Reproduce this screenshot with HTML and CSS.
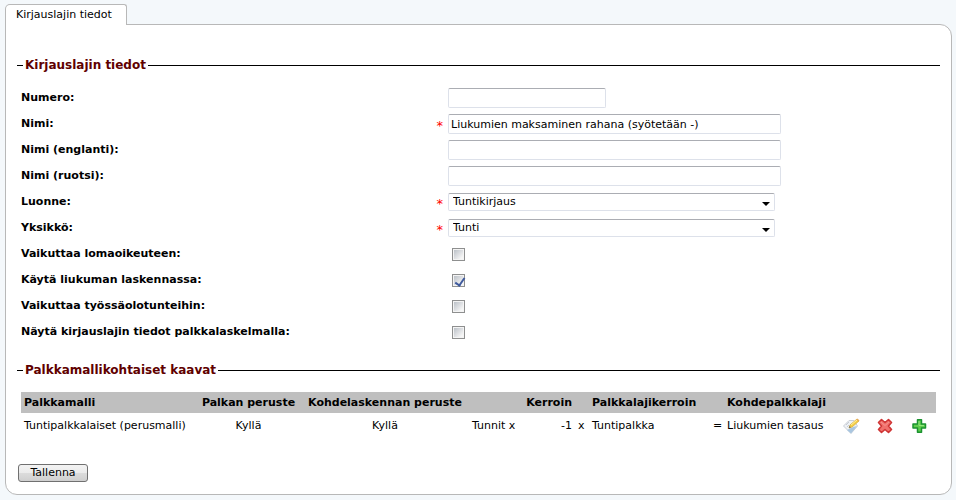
FILE: index.html
```html
<!DOCTYPE html>
<html lang="fi">
<head>
    <meta charset="UTF-8">
    <meta name="viewport" content="width=device-width, initial-scale=1.0">
    <title>Kirjauslajin tiedot</title>
    <link rel="stylesheet" href="styles.css">
</head>
<body>
    <div class="tabs">
      <a class="tab" href="#tiedot">Kirjauslajin tiedot</a>
    </div>
    <form class="panel" id="tiedot">
      <fieldset>
        <legend>Kirjauslajin tiedot</legend>
        <div class="rows">
          <div class="row">
            <label for="numero">Numero:</label>
            <input type="text" id="numero" class="short">
          </div>
          <div class="row">
            <label for="nimi">Nimi: <span class="required">*</span></label>
            <input type="text" id="nimi" value="Liukumien maksaminen rahana (syötetään -)">
          </div>
          <div class="row">
            <label for="nimiEn">Nimi (englanti):</label>
            <input type="text" id="nimiEn">
          </div>
          <div class="row">
            <label for="nimiSv">Nimi (ruotsi):</label>
            <input type="text" id="nimiSv">
          </div>
          <div class="row">
            <label for="luonne">Luonne: <span class="required">*</span></label>
            <span class="select">
              <select id="luonne">
                <option>Tuntikirjaus</option>
              </select>
            </span>
          </div>
          <div class="row">
            <label for="yksikko">Yksikkö: <span class="required">*</span></label>
            <span class="select">
              <select id="yksikko">
                <option>Tunti</option>
              </select>
            </span>
          </div>
          <div class="row">
            <label for="loma">Vaikuttaa lomaoikeuteen:</label>
            <input type="checkbox" id="loma">
          </div>
          <div class="row">
            <label for="liukuma">Käytä liukuman laskennassa:</label>
            <input type="checkbox" id="liukuma" checked>
          </div>
          <div class="row">
            <label for="tyossaolo">Vaikuttaa työssäolotunteihin:</label>
            <input type="checkbox" id="tyossaolo">
          </div>
          <div class="row">
            <label for="laskelma">Näytä kirjauslajin tiedot palkkalaskelmalla:</label>
            <input type="checkbox" id="laskelma">
          </div>
        </div>
      </fieldset>

      <fieldset>
        <legend>Palkkamallikohtaiset kaavat</legend>
        <table>
          <colgroup>
            <col class="col-model">
            <col class="col-basis">
            <col class="col-target">
            <col class="col-number">
            <col class="col-number">
            <col class="col-sign">
            <col class="col-factor">
            <col class="col-sign">
            <col class="col-type">
            <col class="col-icon">
            <col class="col-icon">
            <col class="col-icon">
          </colgroup>
          <thead>
            <tr>
              <th>Palkkamalli</th>
              <th class="center">Palkan peruste</th>
              <th class="center">Kohdelaskennan peruste</th>
              <th></th>
              <th class="right">Kerroin</th>
              <th></th>
              <th>Palkkalajikerroin</th>
              <th></th>
              <th>Kohdepalkkalaji</th>
              <th></th>
              <th></th>
              <th></th>
            </tr>
          </thead>
          <tbody>
            <tr>
              <td>Tuntipalkkalaiset (perusmalli)</td>
              <td class="center">Kyllä</td>
              <td class="center">Kyllä</td>
              <td>Tunnit x</td>
              <td class="right">-1</td>
              <td>x</td>
              <td>Tuntipalkka</td>
              <td>=</td>
              <td>Liukumien tasaus</td>
              <td class="center">
                <button type="button" class="icon" aria-label="Muokkaa">
                  <svg width="18" height="18" viewBox="0 0 18 18">
                    <path d="M1.500 9L7 3.500h5L15.500 9 9 16.500z" fill="#eef1f5" stroke="#c9ced6"/>
                    <path d="M5 13l6-3 4-1-6 7.500z" fill="#a9c6e0"/>
                    <path d="M4 8l3-3M5 10l2-2" stroke="#c6ccd4"/>
                    <path d="M7 11l1-3 7-6 2 2-7 6z" fill="#f5cf45" stroke="#d9a933" stroke-width=".7"/>
                    <path d="M9 8l6-5" stroke="#fff0a0"/>
                    <path d="M7 11l.5-2 1.500 1.300z" fill="#666"/>
                    <path d="M14.500 2.500l1-1 2 2-1 1z" fill="#e8a95c"/>
                  </svg>
                </button>
              </td>
              <td class="center">
                <button type="button" class="icon" aria-label="Poista">
                  <svg width="18" height="18" viewBox="0 0 18 18">
                    <path d="M5.500 2.500L9 5.500l3.500-3 3 3L12.500 9l3 3.500-3 3L9 12.500l-3.500 3-3-3L5.500 9l-3-3.500z" fill="#f0716d" stroke="#cf3434" stroke-width="1.600" stroke-linejoin="round"/>
                    <path d="M5 5l4 3.500L13 5" fill="none" stroke="#f6928d"/>
                  </svg>
                </button>
              </td>
              <td class="center">
                <button type="button" class="icon" aria-label="Lisää">
                  <svg width="18" height="18" viewBox="0 0 18 18">
                    <path d="M7.500 2.800h4v4.200h4v4h-4v4.200h-4V11h-4.500V7h4.500z" fill="#5fce4c" stroke="#1b9230" stroke-width="1.500" stroke-linejoin="round"/>
                    <path d="M9 4v4.500h5" fill="none" stroke="#93e67e"/>
                  </svg>
                </button>
              </td>
            </tr>
          </tbody>
        </table>
      </fieldset>

      <button type="submit" class="save">Tallenna</button>
    </form>
</body>
</html>
```

FILE: styles.css
```css
* {
  box-sizing: border-box;
  margin: 0;
  padding: 0;
}

body {
  padding: 4px 4px 4px 5px;
  font-family: Verdana, "DejaVu Sans", sans-serif;
  font-size: 11px;
  line-height: 14px;
  color: #000;
  background-color: #f4f8fb;
}

/* Tab sits on the top border of the panel */
.tabs {
  display: flex;
}

.tab {
  position: relative;
  z-index: 1;
  height: 21px;
  margin-bottom: -1px;
  padding: 3px 14px 3px 10px;
  color: #000;
  text-decoration: none;
  background-color: #fff;
  border: 1px solid #b8b8b8;
  border-bottom: none;
  border-radius: 5px 3px 0 0;
}

.panel {
  padding: 32px 11px 12px;
  background-color: #fff;
  border: 1px solid #b8b8b8;
  border-radius: 0 12px 12px 12px;
}

fieldset {
  min-width: 0;
  padding: 0 4px;
  border: none;
  border-top: 1px solid #000;
}

legend {
  margin-left: 2px;
  padding: 0 2px;
  font-size: 12px;
  font-weight: bold;
  line-height: 16px;
  color: #600000;
}

/* Form rows */
.rows {
  padding: 12px 0 17px;
}

.row {
  display: grid;
  grid-template-columns: 7fr 8fr;
  align-items: center;
  height: 26px;
}

label {
  display: flex;
  justify-content: space-between;
  font-weight: bold;
}

.required {
  padding-right: 5px;
  font-size: 13px;
  line-height: 18px;
  height: 14px;
  font-weight: normal;
  color: #f00;
}

input,
select,
button {
  font: inherit;
  color: #000;
}

input[type="text"] {
  width: 333px;
  height: 20px;
  padding: 0 2px;
  background-color: #fff;
  border: 1px solid #dde1ea;
  border-top-color: #abadb3;
  border-radius: 2px;
}

input[type="text"].short {
  width: 158px;
}

.select {
  position: relative;
  width: 327px;
  height: 18px;
}

select {
  display: block;
  width: 100%;
  height: 100%;
  padding: 0 20px 0 4px;
  appearance: none;
  background-color: #fff;
  border: 1px solid #dde1ea;
  border-top-color: #abadb3;
  border-radius: 2px;
}

.select::after {
  content: "";
  position: absolute;
  top: 9px;
  right: 5px;
  border: 4px solid transparent;
  border-top-color: #000;
  border-bottom: none;
  pointer-events: none;
}

input[type="checkbox"] {
  width: 13px;
  height: 13px;
  margin-left: 4px;
  appearance: none;
  background: linear-gradient(135deg, #b4bac2, #f6f6f6 80%);
  border: 1px solid #8e8f8f;
  box-shadow: inset 0 0 0 1px #f4f4f4;
}

input[type="checkbox"]:checked::after {
  content: "";
  display: block;
  width: 4px;
  height: 8px;
  margin: 1px 0 0 4px;
  border: solid #3f5a9d;
  border-width: 0 2px 2px 0;
  transform: rotate(35deg);
}

/* Formula table */
table {
  width: 100%;
  margin-top: 14px;
  table-layout: fixed;
  border-collapse: collapse;
}

th,
td {
  padding: 0 3px;
  text-align: left;
  white-space: nowrap;
}

th {
  height: 21px;
  background-color: #bfbfbf;
}

td {
  height: 26px;
}

.center {
  text-align: center;
}

.right {
  text-align: right;
}

.col-model {
  width: 175px;
}

.col-basis {
  width: 105px;
}

.col-target {
  width: 168px;
}

.col-number {
  width: 53px;
}

.col-sign {
  width: 14px;
}

.col-factor {
  width: 121px;
}

.col-type {
  width: 110px;
}

.col-icon {
  width: 34px;
}

.icon {
  width: 18px;
  height: 18px;
  vertical-align: middle;
  background: none;
  border: none;
  cursor: pointer;
}

.icon svg {
  display: block;
}

.save {
  display: block;
  width: 70px;
  height: 18px;
  margin: 25px 0 0 1px;
  background: linear-gradient(#f3f3f3, #ebebeb 50%, #dcdcdc 50%, #cfcfcf);
  border: 1px solid #707070;
  border-radius: 3px;
  cursor: pointer;
}
```
